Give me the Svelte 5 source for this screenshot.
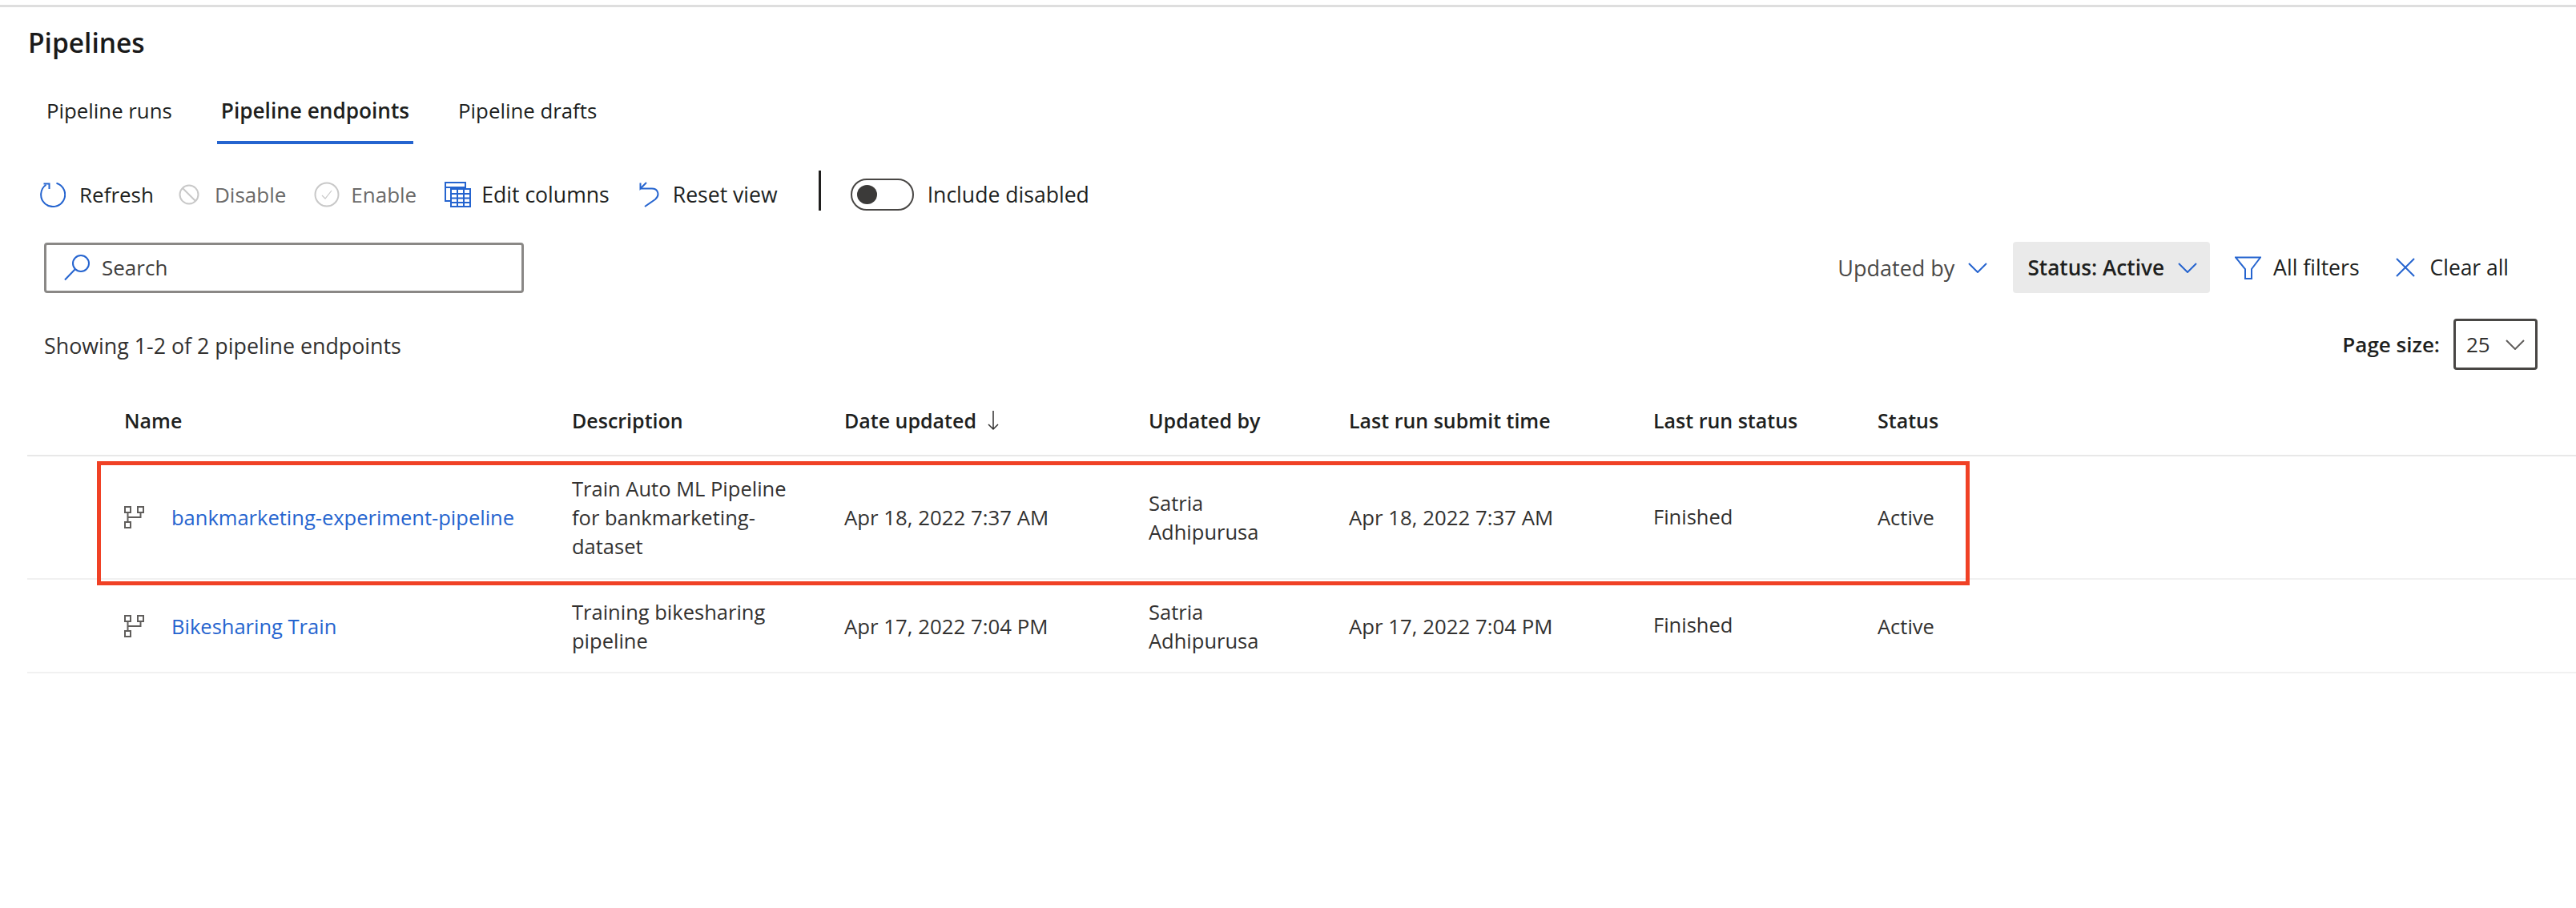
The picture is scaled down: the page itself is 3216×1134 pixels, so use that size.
<script lang="ts">
	const columns = [
		{ label: "Name" },
		{ label: "Description" },
		{ label: "Date updated", sorted: true },
		{ label: "Updated by" },
		{ label: "Last run submit time" },
		{ label: "Last run status" },
		{ label: "Status" },
	];

	const endpoints = [
		{
			name: "bankmarketing-experiment-pipeline",
			description: "Train Auto ML Pipeline for bankmarketing-dataset",
			updated: "Apr 18, 2022 7:37 AM",
			updatedBy: "Satria Adhipurusa",
			lastRun: "Apr 18, 2022 7:37 AM",
			lastStatus: "Finished",
			status: "Active",
		},
		{
			name: "Bikesharing Train",
			description: "Training bikesharing pipeline",
			updated: "Apr 17, 2022 7:04 PM",
			updatedBy: "Satria Adhipurusa",
			lastRun: "Apr 17, 2022 7:04 PM",
			lastStatus: "Finished",
			status: "Active",
		},
	];

	let includeDisabled = $state(false);
</script>

<main class="page">
	<div class="top-line"></div>
	<h1 class="title">Pipelines</h1>

	<nav class="tabs">
		<button class="tab" type="button">Pipeline runs</button>
		<button class="tab active" type="button">Pipeline endpoints</button>
		<button class="tab" type="button">Pipeline drafts</button>
	</nav>

	<div class="toolbar">
		<button class="tool refresh" type="button">
			<svg width="32" height="32" viewBox="0 0 32 32" fill="none" stroke="#2564cf" stroke-width="2">
				<path d="M20.5 1.7A15 15 0 1 1 7.5 3.8" />
				<path d="M4.500 2.500H11.500V9" />
			</svg>
			Refresh
		</button>
		<button class="tool off disable" type="button">
			<svg width="26" height="26" viewBox="0 0 26 26" fill="none" stroke="#c8c8c8" stroke-width="2">
				<circle cx="13" cy="13" r="11.500" />
				<path d="M5 5L21 21" />
			</svg>
			Disable
		</button>
		<button class="tool off enable" type="button">
			<svg width="32" height="32" viewBox="0 0 32 32" fill="none" stroke="#c8c8c8" stroke-width="2">
				<circle cx="16" cy="16" r="14.500" />
				<path d="M10 17L14 21L22 11" stroke-width="1.200" />
			</svg>
			Enable
		</button>
		<button class="tool columns" type="button">
			<svg width="33" height="32" viewBox="0 0 33 32" fill="none" stroke="#2564cf" stroke-width="2">
				<path d="M7 24H1V1H26V8" />
				<path d="M1 7H26" />
				<rect x="8" y="9" width="24" height="22" fill="#fff" />
				<path d="M8 15H32M8 20.500H32M8 26H32M16 9V31M24 9V31" />
			</svg>
			Edit columns
		</button>
		<button class="tool reset" type="button">
			<svg width="25" height="32" viewBox="0 0 25 32" fill="none" stroke="#2564cf" stroke-width="2">
				<path d="M9 1L1.500 8.500V1.500" />
				<path d="M1.500 8.500H15C24 8 26 17 20 22L7 31" />
			</svg>
			Reset view
		</button>
		<span class="divider"></span>
		<button
			class="switch"
			type="button"
			aria-label="Include disabled"
			onclick={() => (includeDisabled = !includeDisabled)}
		>
			<span class="knob" class:on={includeDisabled}></span>
		</button>
		<span class="switch-label">Include disabled</span>
	</div>

	<div class="filter-row">
		<label class="search">
			<svg width="33" height="33" viewBox="0 0 33 33" fill="none" stroke="#2564cf" stroke-width="2">
				<circle cx="21" cy="11" r="10" />
				<path d="M14 18L1 31.500" />
			</svg>
			<input type="text" placeholder="Search" />
		</label>

		<div class="filters">
			<button class="filter" type="button">
				Updated by
				<svg class="chev" width="24" height="13" viewBox="0 0 24 13" fill="none" stroke="#2564cf" stroke-width="2">
					<path d="M1 1L12 12L23 1" />
				</svg>
			</button>
			<button class="filter chosen" type="button">
				Status: Active
				<svg class="chev" width="24" height="13" viewBox="0 0 24 13" fill="none" stroke="#2564cf" stroke-width="2">
					<path d="M1 1L12 12L23 1" />
				</svg>
			</button>
			<button class="action all-filters" type="button">
				<svg width="33" height="29" viewBox="0 0 33 29" fill="none" stroke="#2564cf" stroke-width="2">
					<path d="M1 1.500H32L21 16V28H13V16Z" />
				</svg>
				All filters
			</button>
			<button class="action clear" type="button">
				<svg width="24" height="24" viewBox="0 0 24 24" fill="none" stroke="#2564cf" stroke-width="2">
					<path d="M1 1L23 23M23 1L1 23" />
				</svg>
				Clear all
			</button>
		</div>
	</div>

	<div class="summary-row">
		<span class="summary">Showing 1-2 of 2 pipeline endpoints</span>
		<div class="page-size">
			<span class="page-size-label">Page size:</span>
			<button class="page-select" type="button">
				25
				<svg width="24" height="13" viewBox="0 0 24 13" fill="none" stroke="#605e5c" stroke-width="2">
					<path d="M1 1L12 12L23 1" />
				</svg>
			</button>
		</div>
	</div>

	<div class="table">
		<div class="row head">
			{#each columns as col}
				<div class="cell">
					{col.label}
					{#if col.sorted}
						<svg class="sort" width="14" height="26" viewBox="0 0 14 26" fill="none" stroke="#323130" stroke-width="1.500">
							<path d="M7 1V24M1 18L7 24L13 18" />
						</svg>
					{/if}
				</div>
			{/each}
		</div>

		{#each endpoints as item, i}
			<div class="row body" class:tall={i === 0}>
				<div class="cell name">
					<svg width="26" height="28" viewBox="0 0 26 28" fill="none" stroke="#605e5c" stroke-width="2">
						<rect x="1" y="1" width="7" height="7" />
						<rect x="17" y="1" width="7" height="7" />
						<rect x="1" y="20" width="7" height="7" />
						<path d="M4.500 8V20M4.500 14H20.500V8" />
					</svg>
					<a href="#top">{item.name}</a>
				</div>
				<div class="cell wrap desc">{item.description}</div>
				<div class="cell date">{item.updated}</div>
				<div class="cell wrap by">{item.updatedBy}</div>
				<div class="cell date">{item.lastRun}</div>
				<div class="cell finished">{item.lastStatus}</div>
				<div class="cell">{item.status}</div>
			</div>
		{/each}

		<div class="highlight"></div>
	</div>
</main>

<style>
	:global(body) {
		margin: 0;
		background: #fff;
	}

	.page {
		font-family: "Open Sans", "Noto Sans", sans-serif;
		font-size: 26px;
		color: #323130;
		height: 1134px;
		overflow: hidden;
	}

	button {
		font: inherit;
		color: inherit;
		background: none;
		border: none;
		padding: 0;
	}

	.top-line {
		height: 3px;
		margin-top: 6px;
		background: #dedede;
	}

	.title {
		margin: 24px 0 0 35px;
		font-size: 33.5px;
		font-weight: 600;
		line-height: 40px;
		color: #1a1a1a;
	}

	.tabs {
		display: flex;
		gap: 51px;
		height: 60px;
		margin: 47px 0 0 53px;
	}

	.tab {
		height: 60px;
		padding: 0 5px 24px;
		font-size: 25.8px;
		color: #201f1e;
		white-space: nowrap;
	}

	.tab.active {
		font-size: 26.2px;
		font-weight: 600;
		border-bottom: 4px solid #2564cf;
		padding-bottom: 20px;
	}

	.toolbar {
		display: flex;
		align-items: center;
		height: 60px;
		margin: 33px 0 0 50px;
	}

	.tool {
		display: flex;
		align-items: center;
		gap: 17px;
		color: #201f1e;
		white-space: nowrap;
	}

	.tool.off {
		color: #6b6a69;
	}

	.disable {
		margin-left: 31px;
		gap: 19px;
	}

	.enable {
		margin-left: 35px;
		gap: 14px;
	}

	.columns {
		margin-left: 35px;
		gap: 13px;
		font-size: 26.6px;
	}

	.reset {
		margin-left: 37px;
		font-size: 26.6px;
	}

	.divider {
		align-self: flex-start;
		width: 3px;
		height: 50px;
		margin-left: 51px;
		background: #201f1e;
	}

	.switch {
		display: flex;
		align-items: center;
		width: 79px;
		height: 40px;
		margin-left: 37px;
		padding: 0 6px;
		border: 2px solid #484644;
		border-radius: 20px;
		box-sizing: border-box;
	}

	.knob {
		width: 25px;
		height: 24px;
		border-radius: 50%;
		background: #3b3a39;
	}

	.knob.on {
		margin-left: auto;
	}

	.switch-label {
		margin-left: 17px;
		font-size: 26.6px;
		color: #201f1e;
	}

	.filter-row {
		display: flex;
		align-items: center;
		justify-content: space-between;
		height: 64px;
		margin: 29px 0 0 55px;
		padding-right: 84px;
	}

	.search {
		display: flex;
		align-items: center;
		gap: 14px;
		width: 599px;
		height: 63px;
		padding-left: 22px;
		border: 3px solid #8a8886;
		border-radius: 4px;
		box-sizing: border-box;
	}

	.search svg {
		flex: none;
	}

	.search input {
		flex: 1;
		min-width: 0;
		font: inherit;
		border: none;
		outline: none;
		padding: 0;
		color: #323130;
	}

	.search input::placeholder {
		color: #3f3e3d;
		opacity: 1;
	}

	.filters {
		display: flex;
		align-items: center;
	}

	.filter {
		display: flex;
		align-items: center;
		gap: 17px;
		height: 64px;
		font-size: 27px;
		color: #4a4948;
		white-space: nowrap;
	}

	.filter.chosen {
		margin-left: 32px;
		padding: 0 16px 0 18px;
		font-size: 26.2px;
		font-weight: 600;
		color: #201f1e;
		background: #eaeaea;
		border-radius: 4px;
	}

	.action {
		display: flex;
		align-items: center;
		gap: 15px;
		color: #201f1e;
		white-space: nowrap;
	}

	.all-filters {
		margin-left: 31px;
		font-size: 26.6px;
	}

	.clear {
		margin-left: 45px;
		gap: 19px;
		font-size: 26.4px;
	}

	.summary-row {
		display: flex;
		align-items: center;
		justify-content: space-between;
		height: 64px;
		margin: 32px 0 0 55px;
		padding-right: 48px;
		color: #323130;
	}

	.summary {
		font-size: 26.8px;
		padding-top: 2px;
	}

	.page-size {
		display: flex;
		align-items: center;
		gap: 17px;
	}

	.page-size-label {
		font-weight: 600;
		color: #201f1e;
	}

	.page-select {
		display: flex;
		align-items: center;
		gap: 19px;
		width: 105px;
		height: 64px;
		padding-left: 13px;
		border: 3px solid #484644;
		border-radius: 4px;
		box-sizing: border-box;
	}

	.table {
		position: relative;
		margin: 32px 0 0 34px;
		font-size: 25.5px;
	}

	.row {
		display: grid;
		grid-template-columns: 559px 340px 380px 250px 380px 280px 1fr;
		align-items: center;
		padding-left: 121px;
		box-sizing: border-box;
	}

	.row.head {
		height: 76px;
		padding-bottom: 13px;
		border-bottom: 2px solid #e8e8e8;
		font-size: 25px;
		font-weight: 600;
		color: #201f1e;
	}

	.row.head .cell {
		display: flex;
		align-items: center;
		gap: 14px;
	}

	.row.body {
		height: 117px;
		border-bottom: 2px solid #f1f1f1;
		line-height: 36px;
	}

	.row.body.tall {
		height: 154px;
	}

	.name {
		display: flex;
		align-items: center;
		gap: 33px;
	}

	.name a {
		color: #2564cf;
		text-decoration: none;
	}

	.date {
		font-size: 25.8px;
	}

	.desc {
		max-width: 300px;
	}

	.by {
		max-width: 200px;
	}

	.finished {
		padding-bottom: 3px;
	}

	.highlight {
		position: absolute;
		left: 87px;
		top: 82px;
		width: 2338px;
		height: 155px;
		border: 5px solid #f04125;
		box-sizing: border-box;
		pointer-events: none;
	}
</style>
